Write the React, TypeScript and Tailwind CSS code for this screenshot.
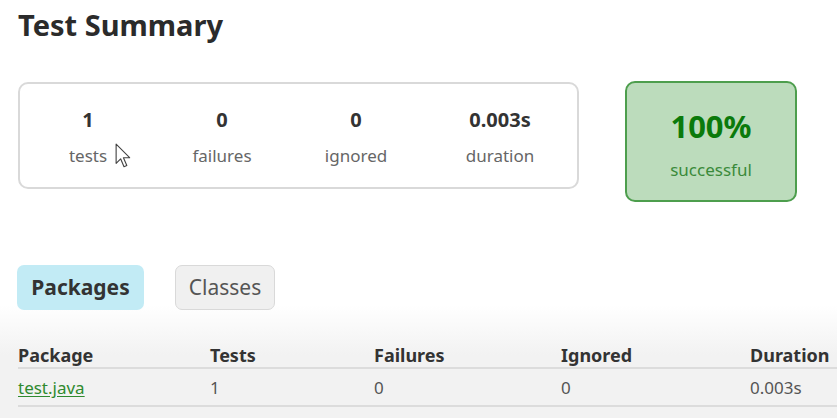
import React from "react";

const stats = [
  { value: "1", label: "tests" },
  { value: "0", label: "failures" },
  { value: "0", label: "ignored" },
  { value: "0.003s", label: "duration" },
];

function Cursor() {
  return (
    <svg width="18" height="26" viewBox="0 0 16 23" className="absolute left-[115px] top-[143px]" aria-hidden="true">
      <path d="M1 1 L1 18 L5 14 L8 21 L10.5 20 L7.5 13 L13 13 Z" fill="#fff" stroke="#444" strokeWidth="1" strokeLinejoin="round" />
    </svg>
  );
}

export default function App() {
  return (
    <div className="relative h-[418px] w-[837px] overflow-hidden bg-white font-['Noto_Sans','Open_Sans',sans-serif] text-[#333]">
      {/* Title */}
      <h1 className="pl-[18px] pt-[5px] text-[29px] font-bold leading-[40px] text-[#2b2b2b]">Test Summary</h1>

      {/* Summary boxes */}
      <div className="mt-[36px] flex items-start pl-[18px]">
        <div className="mt-[1px] grid h-[107px] w-[561px] grid-cols-[136px_132px_136px_152px] rounded-[10px] border-2 border-[#d9d9d9]">
          {stats.map((s) => (
            <div key={s.label} className="flex flex-col items-center justify-center pt-[2px]">
              <span className="text-[20px] font-bold leading-[28px] text-[#333]">{s.value}</span>
              <span className="mt-[10px] text-[17px] leading-[24px] text-[#666]">{s.label}</span>
            </div>
          ))}
        </div>
        <div className="ml-[46px] flex h-[121px] w-[172px] flex-col items-center justify-center rounded-[10px] border-2 border-[#4d9e4d] bg-[#bcdcbc]">
          <span className="mt-[4px] text-[31px] font-bold leading-[40px] text-[#0b7a0b]">100%</span>
          <span className="mt-[12px] text-[17px] leading-[24px] text-[#3a8a3a]">successful</span>
        </div>
      </div>

      {/* Tabs + table */}
      <div className="mt-[63px] bg-[linear-gradient(to_bottom,#ffffff_0px,#ffffff_40px,#f2f2f2_90px,#f2f2f2_100%)] pb-[20px]">
        <div className="flex gap-[31px] pl-[17px]">
          <span className="flex h-[45px] w-[127px] items-center justify-center rounded-[7px] bg-[#c2ebf5] text-[21px] font-bold text-[#333]">
            Packages
          </span>
          <span className="flex h-[45px] w-[100px] items-center justify-center rounded-[7px] border border-[#d9d9d9] bg-[#f0f0f0] text-[21px] text-[#555]">
            Classes
          </span>
        </div>

        <div className="mt-[30px] grid grid-cols-[192px_164px_187px_189px_1fr] pl-[18px] text-[17px]">
          {["Package", "Tests", "Failures", "Ignored", "Duration"].map((h) => (
            <div key={h} className="h-[29px] border-b-2 border-[#dcdcdc] pt-[3px] text-[18px] font-bold leading-[24px] text-[#333]">
              {h}
            </div>
          ))}
          <div className="h-[38px] border-b-2 border-[#dcdcdc] leading-[38px]">
            <a className="text-[#2f8a2f] underline underline-offset-2">test.java</a>
          </div>
          {["1", "0", "0", "0.003s"].map((v, i) => (
            <div key={i} className="h-[38px] border-b-2 border-[#dcdcdc] leading-[38px] text-[#555]">
              {v}
            </div>
          ))}
        </div>
      </div>

      <Cursor />
    </div>
  );
}
